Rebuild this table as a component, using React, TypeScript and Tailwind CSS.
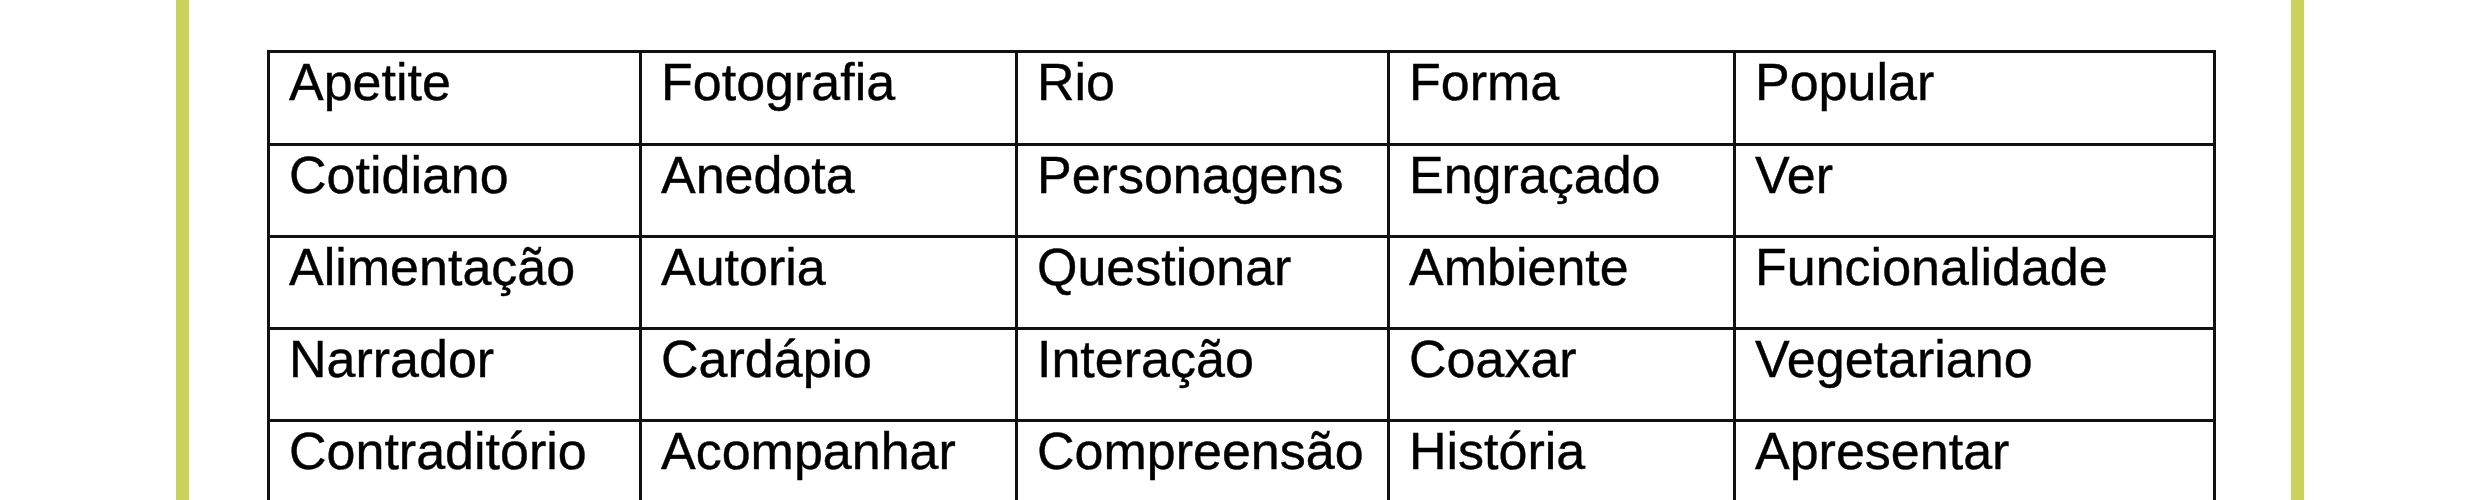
import React from "react";

const rows: string[][] = [
  ["Apetite", "Fotografia", "Rio", "Forma", "Popular"],
  ["Cotidiano", "Anedota", "Personagens", "Engraçado", "Ver"],
  ["Alimentação", "Autoria", "Questionar", "Ambiente", "Funcionalidade"],
  ["Narrador", "Cardápio", "Interação", "Coaxar", "Vegetariano"],
  ["Contraditório", "Acompanhar", "Compreensão", "História", "Apresentar"],
];

export default function App() {
  return (
    <div
      className="flex h-[500px] w-[2480px] overflow-hidden bg-white pl-[176px]"
      style={{ fontFamily: '"Liberation Sans", Arial, sans-serif' }}
    >
      <div className="h-[500px] w-[13px] shrink-0 bg-[#c9d35b]" />
      <div className="w-[2102px] shrink-0 pl-[78px] pt-[50px]">
        <div className="grid w-[1949px] grid-cols-[372px_376px_372px_346px_480px] grid-rows-[93px_92px_92px_92px_92px] border-l-[3px] border-t-[3px] border-[#111]">
          {rows.flatMap((r, i) =>
            r.map((w, j) => (
              <div
                key={`${i}-${j}`}
                className="border-b-[3px] border-r-[3px] border-[#111] pl-[19px] pt-[3px] text-[52px] leading-none text-black [-webkit-text-stroke:0.4px_#000]"
              >
                {w}
              </div>
            ))
          )}
        </div>
      </div>
      <div className="h-[500px] w-[13px] shrink-0 bg-[#c9d35b]" />
    </div>
  );
}
